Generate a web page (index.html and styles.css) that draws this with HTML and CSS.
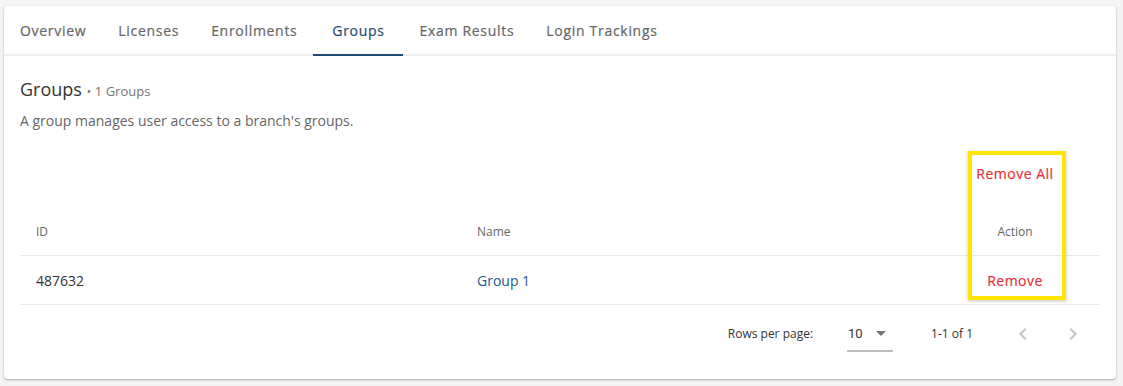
FILE: index.html
```html
<!DOCTYPE html>
<html lang="en">
<head>
    <meta charset="UTF-8">
    <meta name="viewport" content="width=device-width, initial-scale=1.0">
    <title>Groups</title>
    <link rel="stylesheet" href="styles.css">
</head>
<body>
    <div class="card">
        <div class="tabs">
            <div class="tab">Overview</div>
            <div class="tab">Licenses</div>
            <div class="tab">Enrollments</div>
            <div class="tab active">Groups</div>
            <div class="tab">Exam Results</div>
            <div class="tab">Login Trackings</div>
        </div>

        <div class="content">
            <p class="heading">Groups <span class="count">&bull; 1 Groups</span></p>
            <p class="description">A group manages user access to a branch's groups.</p>

            <div class="table">
                <div class="row toolbar-row">
                    <div></div>
                    <div></div>
                    <div class="action-cell"><span class="danger">Remove All</span></div>
                </div>
                <div class="row head-row">
                    <div class="cell">ID</div>
                    <div class="cell">Name</div>
                    <div class="action-cell">Action</div>
                </div>
                <div class="row body-row">
                    <div class="cell">487632</div>
                    <div class="cell"><span class="link">Group 1</span></div>
                    <div class="action-cell"><span class="danger">Remove</span></div>
                </div>
                <div class="highlight"></div>
            </div>

            <div class="pagination">
                <span class="rows-label">Rows per page:</span>
                <div class="select">
                    <span>10</span>
                    <svg width="10" height="5" viewBox="0 0 10 5"><path d="M0 0h10L5 5z" fill="#757575"/></svg>
                </div>
                <span class="range">1-1 of 1</span>
                <div class="pager">
                    <div class="page-button">
                        <svg width="24" height="24" viewBox="0 0 24 24"><path d="M15.41 7.41 14 6l-6 6 6 6 1.41-1.41L10.83 12z" fill="#c4c4c4"/></svg>
                    </div>
                    <div class="page-button">
                        <svg width="24" height="24" viewBox="0 0 24 24"><path d="M10 6 8.59 7.41 13.17 12l-4.58 4.59L10 18l6-6z" fill="#c4c4c4"/></svg>
                    </div>
                </div>
            </div>
        </div>
    </div>
</body>
</html>
```

FILE: styles.css
```css
body {
    margin: 0;
    padding: 6px 7px 7px 4px;
    background-color: #f4f4f4;
    font-family: "Open Sans", "Liberation Sans", sans-serif;
    color: #333;
}
.card {
    background-color: white;
    height: 373px;
    border-radius: 4px;
    box-shadow: 0 1px 3px rgba(0, 0, 0, 0.2), 0 1px 1px rgba(0, 0, 0, 0.12);
}
.tabs {
    display: flex;
    height: 48px;
    border-bottom: 2px solid #eeeeee;
}
.tab {
    min-width: 58px;
    padding: 0 16px;
    display: flex;
    align-items: center;
    justify-content: center;
    font-size: 14px;
    font-weight: 500;
    letter-spacing: 0.7px;
    color: #666;
    -webkit-text-stroke: 0.2px currentColor;
}
.tab.active {
    color: #1f4b73;
    border-bottom: 2px solid #1f4b73;
    margin-bottom: -2px;
}
.content {
    padding: 0 16px;
}
.heading {
    margin: 21px 0 0;
    font-size: 18px;
    line-height: 24px;
    color: #333;
}
.count {
    font-size: 13px;
    color: #757575;
}
.description {
    margin: 8px 0 0;
    font-size: 14px;
    line-height: 20px;
    color: #666;
}
.table {
    position: relative;
    margin-top: 19px;
}
.row {
    display: grid;
    grid-template-columns: 441px 1fr 130px;
    align-items: center;
}
.toolbar-row {
    height: 46px;
    padding-bottom: 4px;
}
.head-row {
    height: 47px;
    padding-top: 8px;
    border-bottom: 1px solid #e8e8e8;
    font-size: 12px;
    color: #666;
}
.body-row {
    height: 48px;
    border-bottom: 1px solid #e8e8e8;
    font-size: 14px;
    color: #333;
}
.cell {
    padding-left: 16px;
}
.action-cell {
    width: 90px;
    text-align: center;
}
.danger {
    color: #e53238;
    font-size: 14px;
    font-weight: 500;
    letter-spacing: 0.5px;
    -webkit-text-stroke: 0.2px currentColor;
}
.link {
    color: #245985;
}
.highlight {
    position: absolute;
    left: 948px;
    top: 1px;
    width: 90px;
    height: 141px;
    border: 4px solid #ffe600;
    box-shadow: 0 1px 3px rgba(0, 0, 0, 0.25);
}
.pagination {
    display: flex;
    align-items: center;
    justify-content: flex-end;
    height: 57px;
    padding-right: 3px;
    font-size: 12px;
    color: #333;
}
.rows-label {
    margin-right: 34px;
}
.select {
    display: flex;
    align-items: center;
    justify-content: space-between;
    width: 38px;
    height: 32px;
    padding: 0 7px 0 1px;
    margin-top: 2px;
    border-bottom: 2px solid #bdbdbd;
    font-family: Roboto, sans-serif;
    font-size: 13px;
    margin-right: 38px;
}
.range {
    margin-right: 26px;
}
.pager {
    display: flex;
    gap: 2px;
}
.page-button {
    width: 48px;
    height: 48px;
    display: flex;
    align-items: center;
    justify-content: center;
}
```
